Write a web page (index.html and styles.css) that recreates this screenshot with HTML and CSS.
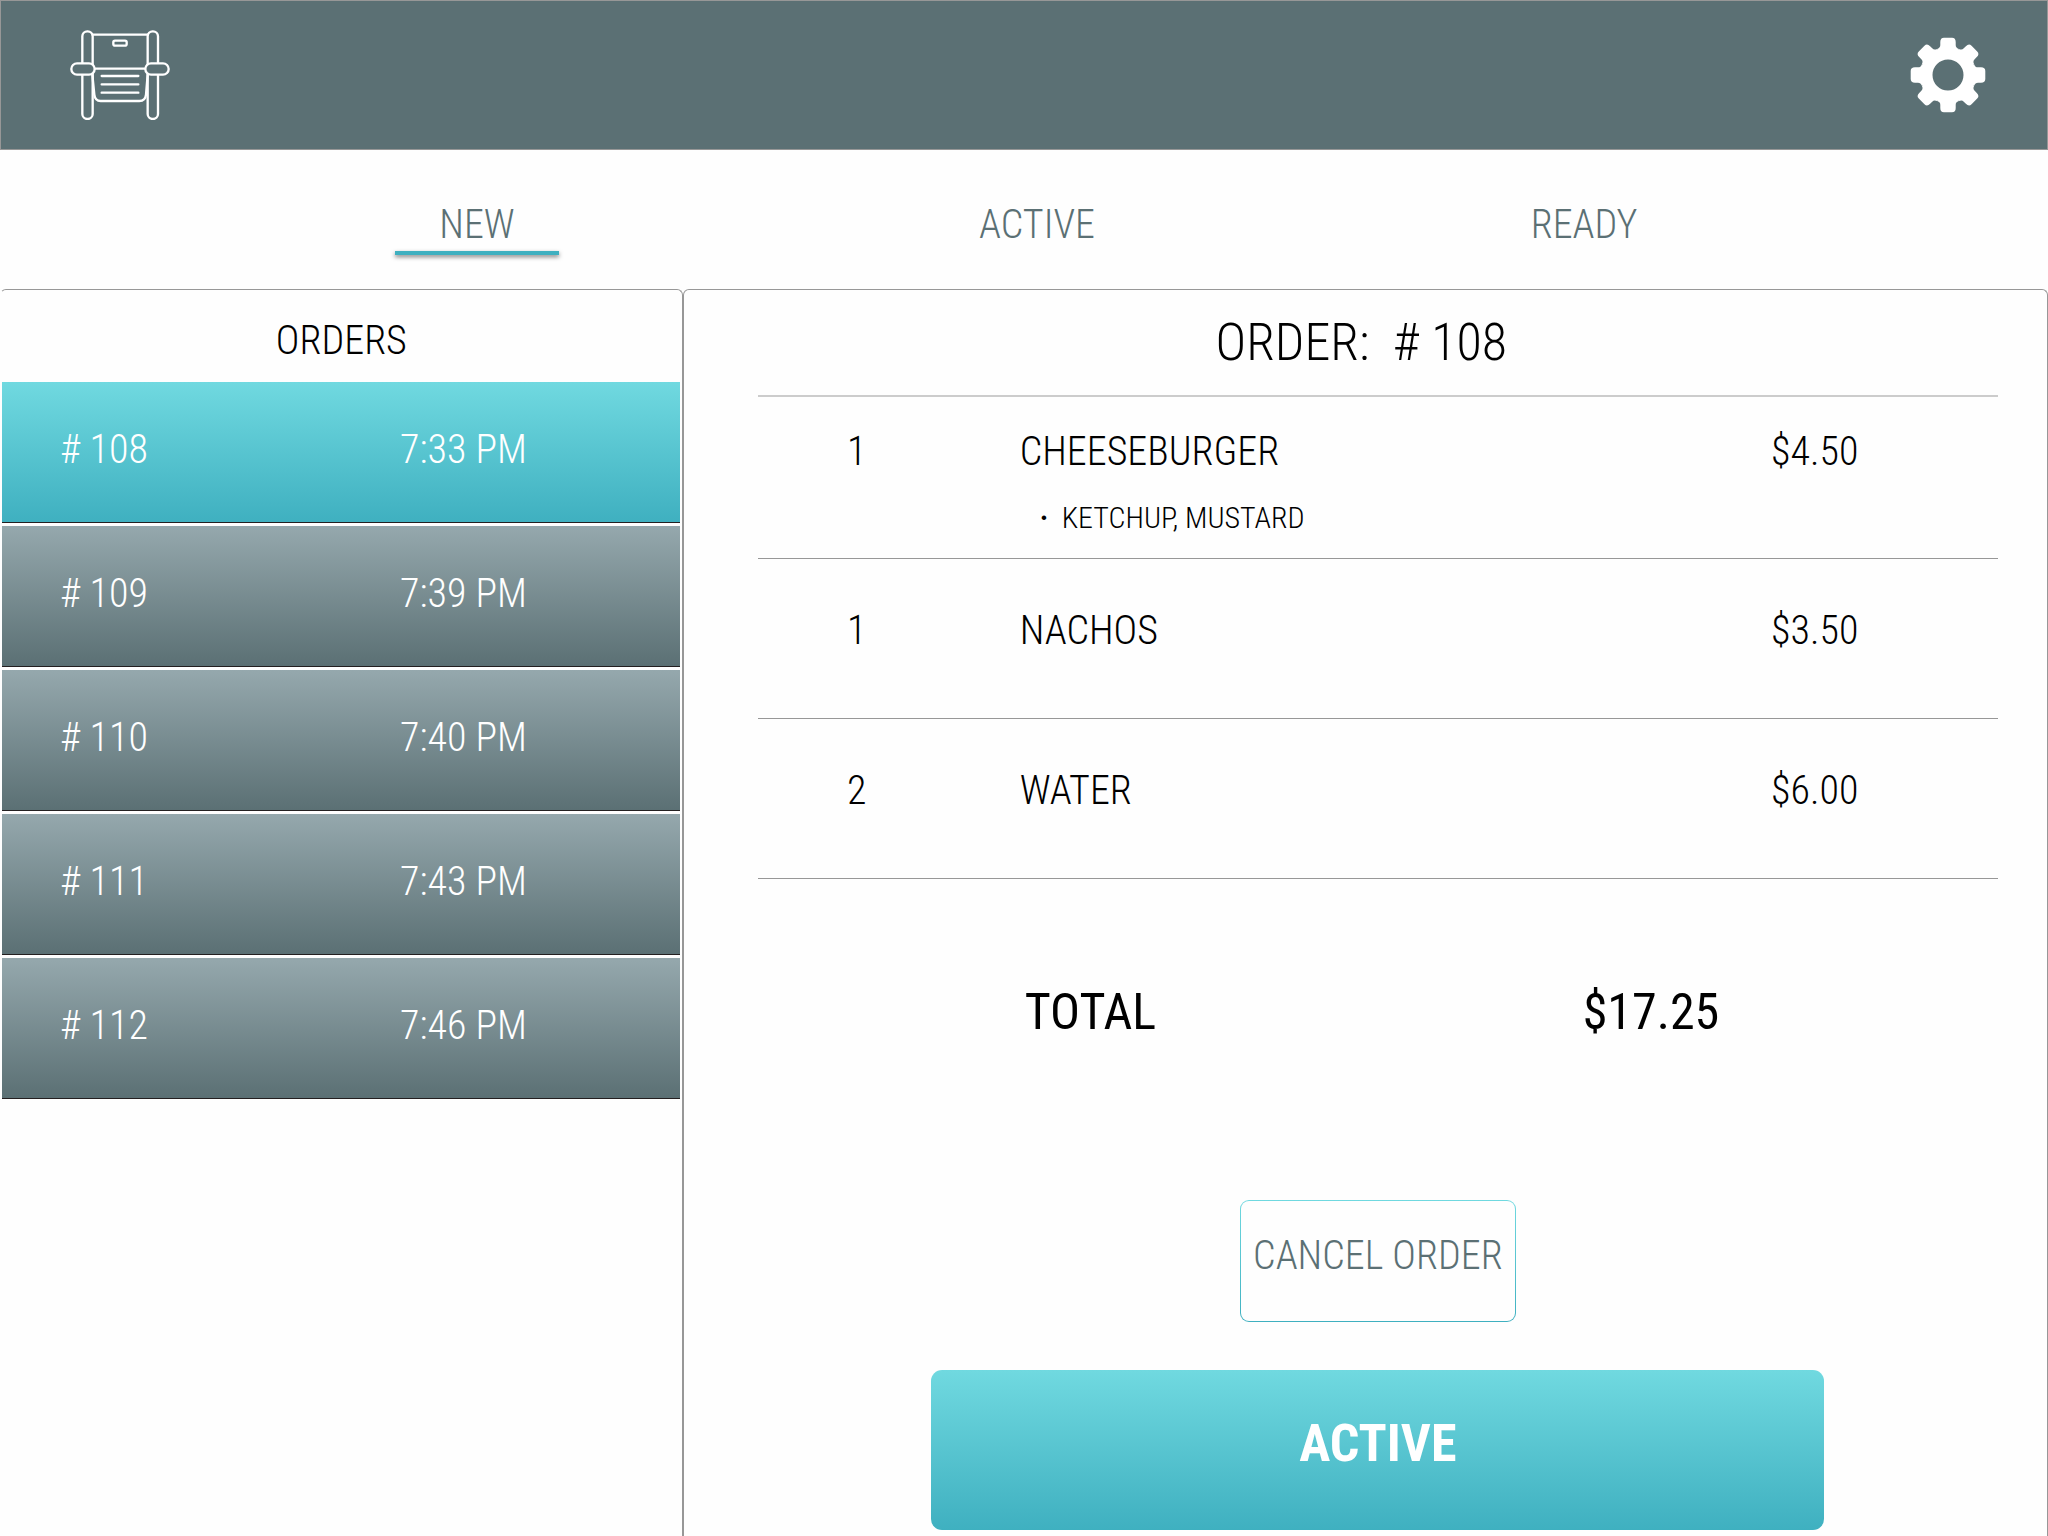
FILE: index.html
```html
<!DOCTYPE html>
<html lang="en">
<head>
    <meta charset="UTF-8">
    <meta name="viewport" content="width=device-width, initial-scale=1.0">
    <title>Orders</title>
    <link rel="stylesheet" href="styles.css">
</head>
<body>

<header class="topbar">
    <a href="#" class="logo" aria-label="Home">
        <svg viewBox="60 58 300 270" width="100" height="90" fill="none" stroke="#fff" stroke-width="7" stroke-linecap="round">
            <path d="M128 72H293M134 174H287"/>
            <rect x="97" y="62" width="31" height="263" rx="15"/>
            <rect x="293" y="62" width="31" height="263" rx="15"/>
            <path d="M127 192L133 252Q135 271 152 271H268Q286 271 288 252L293 192"/>
            <path d="M155 196H265M155 221H265M155 246H265"/>
            <rect x="190" y="90" width="40" height="15" rx="5"/>
            <rect class="arm" x="64" y="158" width="70" height="34" rx="17"/>
            <rect class="arm" x="286" y="158" width="70" height="34" rx="17"/>
        </svg>
    </a>
    <button class="settings" aria-label="Settings">
        <svg viewBox="-38 -38 76 76" width="76" height="76" fill="#fff">
            <defs>
                <path id="tooth" d="M-7 -19L-10.8 -26.1C-8.5 -27 -7.7 -28 -7.7 -30V-33Q-7.7 -37.3 -4 -37.3H4Q7.7 -37.3 7.7 -33V-30C7.7 -28 8.5 -27 10.8 -26.1L7 -19Z"/>
            </defs>
            <circle r="21.5" fill="none" stroke="#fff" stroke-width="12"/>
            <use href="#tooth"/>
            <use href="#tooth" transform="rotate(45)"/>
            <use href="#tooth" transform="rotate(90)"/>
            <use href="#tooth" transform="rotate(135)"/>
            <use href="#tooth" transform="rotate(180)"/>
            <use href="#tooth" transform="rotate(225)"/>
            <use href="#tooth" transform="rotate(270)"/>
            <use href="#tooth" transform="rotate(315)"/>
        </svg>
    </button>
</header>

<nav class="tabs">
    <a href="#new" class="tab selected">NEW</a>
    <a href="#active" class="tab">ACTIVE</a>
    <a href="#ready" class="tab">READY</a>
</nav>

<main class="panels">
    <section class="panel orders">
        <h2 class="orders-title">ORDERS</h2>
        <div class="order-list">
            <button class="order current"><span># 108</span><span>7:33 PM</span></button>
            <button class="order"><span># 109</span><span>7:39 PM</span></button>
            <button class="order"><span># 110</span><span>7:40 PM</span></button>
            <button class="order"><span># 111</span><span>7:43 PM</span></button>
            <button class="order"><span># 112</span><span>7:46 PM</span></button>
        </div>
    </section>

    <section class="panel">
        <h1 class="detail-title">ORDER: &nbsp;# 108</h1>
        <div class="detail">
            <table class="items">
                <tr class="with-extras">
                    <td class="qty">1</td>
                    <td class="name">
                        CHEESEBURGER
                        <ul class="extras">
                            <li>KETCHUP, MUSTARD</li>
                        </ul>
                    </td>
                    <td class="price">$4.50</td>
                </tr>
                <tr>
                    <td class="qty">1</td>
                    <td class="name">NACHOS</td>
                    <td class="price">$3.50</td>
                </tr>
                <tr>
                    <td class="qty">2</td>
                    <td class="name">WATER</td>
                    <td class="price">$6.00</td>
                </tr>
            </table>

            <div class="total">
                <span>TOTAL</span>
                <span>$17.25</span>
            </div>

            <div class="actions">
                <button class="cancel-button">CANCEL ORDER</button>
                <button class="active-button">ACTIVE</button>
            </div>
        </div>
    </section>
</main>

</body>
</html>
```
FILE: styles.css
```css
* {
    box-sizing: border-box;
}
body {
    font-family: 'Roboto Condensed', Roboto, sans-serif;
    font-weight: 300;
    font-size: 40px;
    line-height: 48px;
    background-color: #fefefe;
    color: #000;
    margin: 0;
    min-height: 100vh;
    display: flex;
    flex-direction: column;
}
h1, h2 {
    margin: 0;
    font-weight: 300;
    text-align: center;
}
button {
    font: inherit;
    border: none;
    cursor: pointer;
}
.topbar {
    display: flex;
    justify-content: space-between;
    align-items: center;
    height: 150px;
    padding: 0 61px 0 69px;
    background-color: #5b7074;
    border: 1px solid #979797;
}
.logo svg, .settings svg {
    display: block;
}
.arm {
    fill: #5b7074;
}
.settings {
    padding: 0;
    background: none;
}
.tabs {
    display: grid;
    grid-template-columns: 566fr 554fr 540fr;
    justify-items: center;
    padding: 51px 194px 34px;
}
.tab {
    width: 164px;
    text-align: center;
    text-decoration: none;
    color: #5b7074;
}
.tab::after {
    content: "";
    display: block;
    height: 4px;
    margin-top: 2px;
}
.tab.selected::after {
    background-color: #3fb0c0;
    box-shadow: 0 2px 4px rgba(0, 0, 0, 0.5);
}
.panels {
    flex: 1;
    display: grid;
    grid-template-columns: 1fr 2fr;
}
.panel {
    border: 1px solid #979797;
    border-bottom: none;
    border-radius: 6px 6px 0 0;
}
.panel.orders {
    border-left-color: transparent;
}
.orders-title {
    padding: 27px 0 17px;
    font-size: 40px;
}
.order-list {
    display: flex;
    flex-direction: column;
    gap: 3px;
    padding: 0 2px 0 1px;
}
.order {
    display: grid;
    grid-template-columns: 340px 1fr;
    align-items: center;
    height: 141px;
    padding: 0 0 4px 58px;
    text-align: left;
    color: #fff;
    background: linear-gradient(#95a8ad, #5b7074);
    border-bottom: 1px solid #231f20;
}
.order.current, .active-button {
    background: linear-gradient(#70d9e0, #3fb0c0);
}
.detail-title {
    padding: 21px 8px 20px 0;
    font-size: 52px;
    line-height: 64px;
}
.detail {
    padding: 0 49px 5px 74px;
}
.items {
    width: 100%;
    border-collapse: collapse;
    table-layout: fixed;
    border-top: 2px solid #ccc;
}
.items tr {
    border-bottom: 1px solid #979797;
}
.items td {
    padding: 48px 0 63px;
    vertical-align: top;
}
.items .with-extras td {
    padding: 31px 0 20px;
}
.items .qty {
    width: 198px;
    text-align: center;
}
.items .name, .items .with-extras .name {
    padding-left: 64px;
}
.items .price {
    width: 227px;
}
.extras {
    list-style: none;
    margin: 22px 0 0;
    padding: 0 0 0 20px;
    font-size: 30px;
    line-height: 40px;
}
.extras li {
    display: flex;
}
.extras li::before {
    content: "·";
    width: 22px;
    font-weight: 700;
}
.total {
    display: grid;
    grid-template-columns: 558px 1fr;
    margin: 101px 0 156px;
    padding-left: 267px;
    font-size: 50px;
    line-height: 64px;
    font-weight: 400;
}
.actions {
    display: flex;
    flex-direction: column;
    align-items: center;
    gap: 48px;
}
.cancel-button {
    width: 276px;
    height: 122px;
    padding: 0 0 10px;
    color: #5b7074;
    border: 1px solid transparent;
    border-radius: 9px;
    background: linear-gradient(#fefefe, #fefefe) padding-box, linear-gradient(#70d9e0, #3fb0c0) border-box;
}
.active-button {
    width: 72%;
    height: 160px;
    padding: 0 0 12px;
    color: #fff;
    font-size: 52px;
    font-weight: 700;
    border-radius: 11px;
}
```
